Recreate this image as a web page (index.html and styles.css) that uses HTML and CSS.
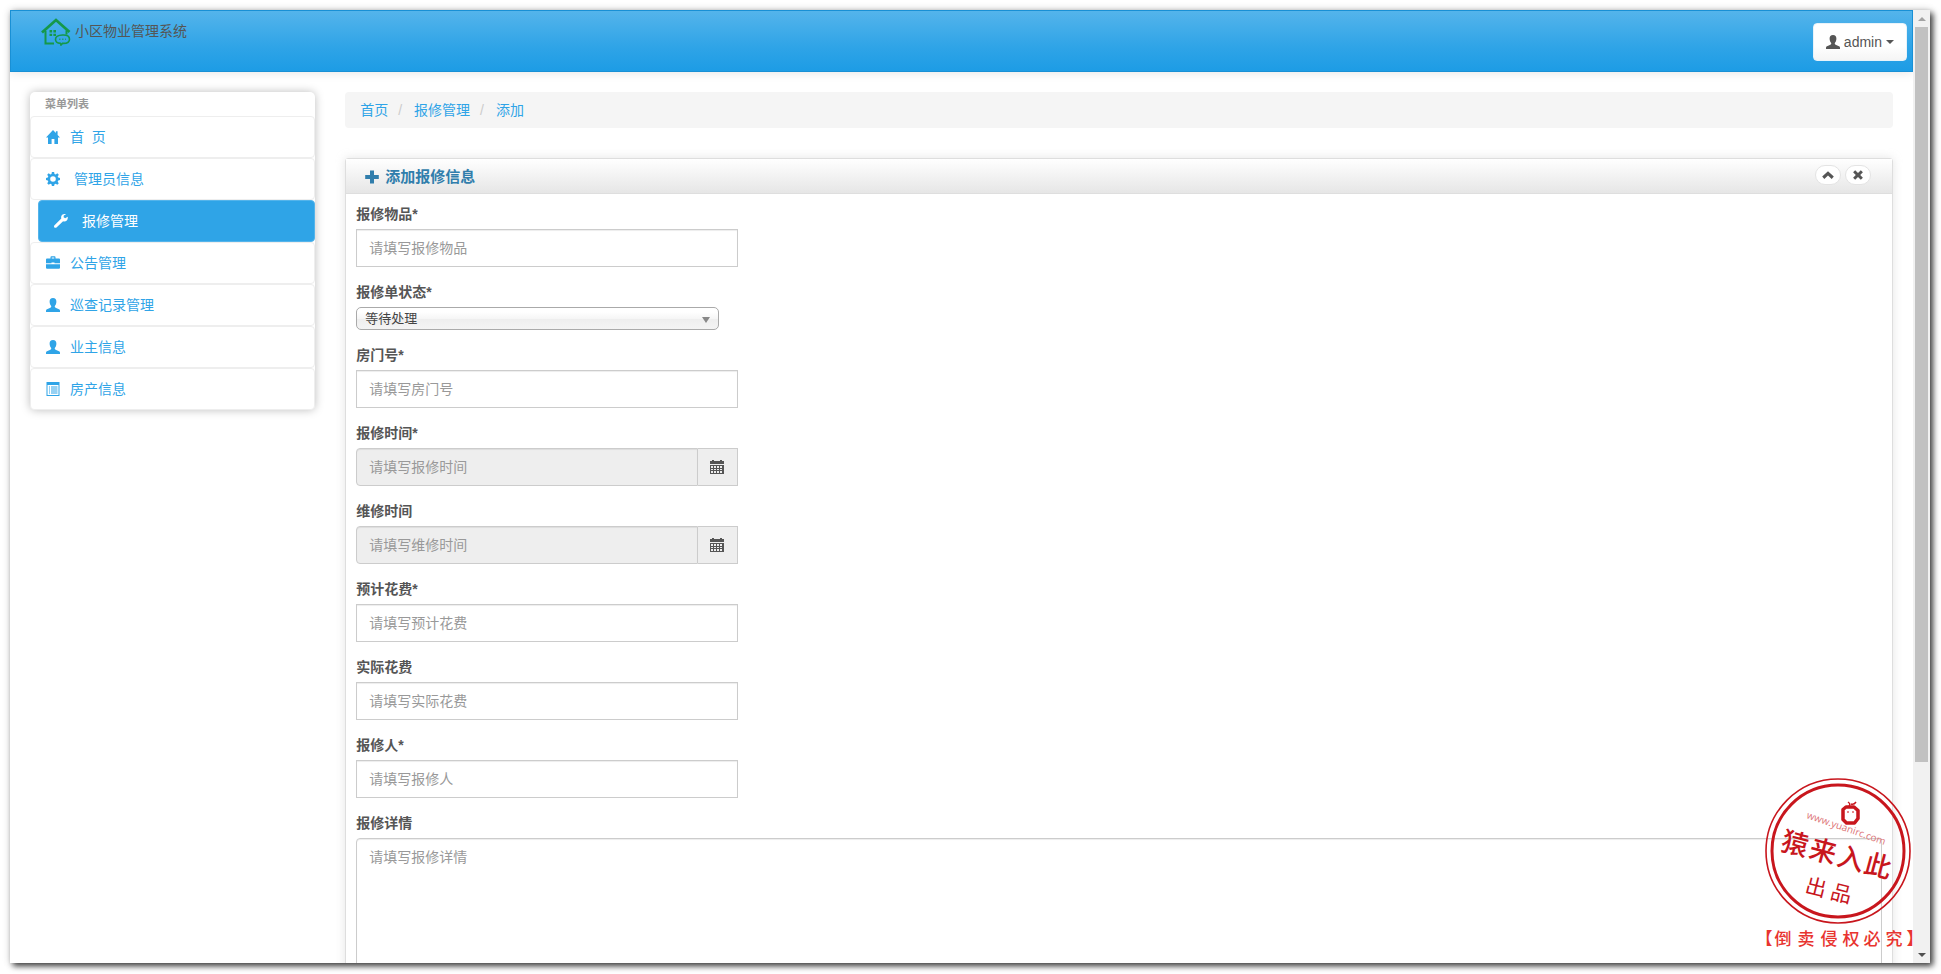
FILE: index.html
```html
<!DOCTYPE html>
<html lang="zh-CN">
<head>
    <title>小区物业管理系统</title>
    <meta charset="UTF-8">
    <meta name="viewport" content="width=device-width, initial-scale=1.0">
    <link rel="stylesheet" href="styles.css">
</head>
<body>
    <!-- 图标 -->
    <svg class="symbols" aria-hidden="true">
        <symbol id="i-home" viewBox="0 0 14 14"><path d="M7 0 0 7.4h2V14h3.600V9h2.800v5H12V7.400h2L11.600 4.900V1.300H9.900v1.800z"/></symbol>
        <symbol id="i-cog" viewBox="0 0 14 14"><path fill-rule="evenodd" d="M5.900 0h2.200l.4 1.900 1.200.5 1.600-1.100 1.500 1.500-1.100 1.600.5 1.200 1.800.4v2.100l-1.800.4-.5 1.200 1.100 1.600-1.500 1.500-1.600-1.100-1.200.5-.4 1.800H5.900l-.4-1.800-1.200-.5-1.600 1.100-1.500-1.500 1.100-1.600-.5-1.200L0 8.100V6l1.800-.4.5-1.200-1.100-1.600 1.500-1.500 1.600 1.100 1.200-.5zM7 4.200a2.800 2.800 0 1 0 0 5.600 2.800 2.800 0 0 0 0-5.600z"/></symbol>
        <symbol id="i-wrench" viewBox="0 0 14 14"><path d="M13.700 2.700 11.200 4.200 9.600 3.200 9.800 1.500 12 .2C10.200-.4 8 .3 7.300 2.200c-.3.900-.2 1.600 0 2.300L.5 11.300c-.7.700-.6 1.600-.1 2.100.6.600 1.500.6 2.100 0l6.600-6.200c1.200.4 2.700.2 3.700-.8.900-.9 1.200-2.400.9-3.700z"/></symbol>
        <symbol id="i-case" viewBox="0 0 14 14"><path d="M4.500 2.500V1.200Q4.500.3 5.400.3h3.200q.9 0 .9.900v1.300H13q1 0 1 1V7.300H8.500V6.500h-3v.8H0V3.500q0-1 1-1zm1.200 0h2.600V1.400H5.700zM0 8.300h14v3.500q0 .9-1 .9H1q-1 0-1-.9z"/></symbol>
        <symbol id="i-user" viewBox="0 0 14 14"><path d="M7 0C4.700 0 3.500 1.600 3.600 3.900c.1 1.600.6 2.900 1.400 3.900.5.700.3 1.600-.6 2L1 11.300c-.7.300-1 .8-1 1.500V14h14v-1.200c0-.7-.3-1.200-1-1.500L9.600 9.800c-.9-.4-1.100-1.300-.6-2 .8-1 1.300-2.300 1.400-3.900C10.500 1.600 9.300 0 7 0z"/></symbol>
        <symbol id="i-list" viewBox="0 0 14 14"><path fill-rule="evenodd" d="M.500 0h13v14H.5zM1.500 3v10h11V3zM3 4.500h1v1H3zm2 0h6.500v1H5zM3 6.500h1v1H3zm2 0h6.500v1H5zM3 8.500h1v1H3zm2 0h6.500v1H5zM3 10.500h1v1H3zm2 0h6.500v1H5z"/></symbol>
        <symbol id="i-plus" viewBox="0 0 14 14"><path d="M5 .500h4V5h4.800v4H9v4.500H5V9H.2V5H5z"/></symbol>
        <symbol id="i-up" viewBox="0 0 12 12"><path d="M6 2.200 11.800 7.600 9.700 9.900 6 6.500 2.300 9.900.2 7.600z"/></symbol>
        <symbol id="i-remove" viewBox="0 0 12 12"><path d="M3.200 1.200 6 4 8.800 1.200 10.900 3.300 8.200 6l2.700 2.700-2.100 2.100L6 8.100l-2.800 2.700-2.100-2.100L3.800 6 1.100 3.300z"/></symbol>
        <symbol id="i-calendar" viewBox="0 0 14 14"><path fill-rule="evenodd" d="M0 1h2V0h2v1h6V0h2v1h2v3H0zM0 5h14v9H0zM1 6v2h2V6zm3 0v2h2V6zm3 0v2h2V6zm3 0v2h2V6zM1 9v1h2V9zm3 0v1h2V9zm3 0v1h2V9zm3 0v1h2V9zM1 11v2h2v-2zm3 0v2h2v-2zm3 0v2h2v-2zm3 0v2h2v-2z"/></symbol>
    </svg>

    <div class="window">
        <div class="page">
            <header class="navbar">
                <a class="brand" href="#">
                    <svg class="logo" viewBox="0 0 30 28" fill="none" stroke="#15984a" stroke-width="2" aria-hidden="true">
                        <path d="M1 14.500 15 2l13.500 12" stroke-width="2.800"/>
                        <path d="M4.500 13v12.500H13M25.500 12.500v4"/>
                        <path d="M21.500 17h1q6 0 6 4.200t-6 4.200h-1l-1.500 1.600-.5-1.600q-5-.3-5-4.200t7-4.200z" stroke-width="1.600"/>
                        <path d="M18 21.200h1.500m1.500 0h1.500m1.500 0H25" stroke-width="1"/>
                        <path d="M8.500 12h2.600v2.600H8.500zm3.900 0H15v2.600h-2.600zM8.500 15.800h2.600v2.300H8.500zm3.900 0H15v2.300h-2.600z" fill="#15984a" stroke="none"/>
                    </svg>
                    <span>小区物业管理系统</span>
                </a>
                <button type="button" class="user-btn">
                    <svg class="icon" aria-hidden="true"><use href="#i-user"/></svg>
                    <span>admin</span>
                    <span class="caret"></span>
                </button>
            </header>

            <div class="row">
                <nav class="sidebar">
                    <div class="menu">
                        <div class="menu-header">菜单列表</div>
                        <ul>
                            <li><a href="#"><svg class="icon" aria-hidden="true"><use href="#i-home"/></svg>首&nbsp; 页</a></li>
                            <li><a href="#" class="wide"><svg class="icon" aria-hidden="true"><use href="#i-cog"/></svg>管理员信息</a></li>
                            <li class="active"><a href="#" class="wide"><svg class="icon" aria-hidden="true"><use href="#i-wrench"/></svg>报修管理</a></li>
                            <li><a href="#"><svg class="icon" aria-hidden="true"><use href="#i-case"/></svg>公告管理</a></li>
                            <li><a href="#"><svg class="icon" aria-hidden="true"><use href="#i-user"/></svg>巡查记录管理</a></li>
                            <li><a href="#"><svg class="icon" aria-hidden="true"><use href="#i-user"/></svg>业主信息</a></li>
                            <li><a href="#"><svg class="icon" aria-hidden="true"><use href="#i-list"/></svg>房产信息</a></li>
                        </ul>
                    </div>
                </nav>

                <main class="content">
                    <ul class="breadcrumb">
                        <li><a href="#">首页</a></li>
                        <li><a href="#">报修管理</a></li>
                        <li><a href="#">添加</a></li>
                    </ul>

                    <section class="box">
                        <div class="box-header">
                            <h2><svg class="icon" aria-hidden="true"><use href="#i-plus"/></svg>添加报修信息</h2>
                            <div class="box-icon">
                                <button type="button" aria-label="收起"><svg aria-hidden="true"><use href="#i-up"/></svg></button>
                                <button type="button" aria-label="关闭"><svg aria-hidden="true"><use href="#i-remove"/></svg></button>
                            </div>
                        </div>
                        <form class="box-content">
                            <div class="form-group">
                                <label for="item">报修物品*</label>
                                <input type="text" id="item" class="form-control" placeholder="请填写报修物品">
                            </div>
                            <div class="form-group">
                                <label for="status">报修单状态*</label>
                                <div class="select-wrap">
                                    <select id="status">
                                        <option>等待处理</option>
                                    </select>
                                </div>
                            </div>
                            <div class="form-group">
                                <label for="room">房门号*</label>
                                <input type="text" id="room" class="form-control" placeholder="请填写房门号">
                            </div>
                            <div class="form-group">
                                <label for="report_time">报修时间*</label>
                                <div class="input-group">
                                    <input type="text" id="report_time" class="form-control" placeholder="请填写报修时间" readonly>
                                    <button type="button" class="addon" aria-label="选择报修时间"><svg class="icon" aria-hidden="true"><use href="#i-calendar"/></svg></button>
                                </div>
                            </div>
                            <div class="form-group">
                                <label for="repair_time">维修时间</label>
                                <div class="input-group">
                                    <input type="text" id="repair_time" class="form-control" placeholder="请填写维修时间" readonly>
                                    <button type="button" class="addon" aria-label="选择维修时间"><svg class="icon" aria-hidden="true"><use href="#i-calendar"/></svg></button>
                                </div>
                            </div>
                            <div class="form-group">
                                <label for="plan_cost">预计花费*</label>
                                <input type="text" id="plan_cost" class="form-control" placeholder="请填写预计花费">
                            </div>
                            <div class="form-group">
                                <label for="real_cost">实际花费</label>
                                <input type="text" id="real_cost" class="form-control" placeholder="请填写实际花费">
                            </div>
                            <div class="form-group">
                                <label for="person">报修人*</label>
                                <input type="text" id="person" class="form-control" placeholder="请填写报修人">
                            </div>
                            <div class="form-group">
                                <label for="detail">报修详情</label>
                                <textarea id="detail" placeholder="请填写报修详情"></textarea>
                            </div>
                        </form>
                    </section>
                </main>
            </div>
        </div>

        <div class="scrollbar" aria-hidden="true">
            <span class="arrow up"></span>
            <span class="track"><span class="thumb"></span></span>
            <span class="arrow down"></span>
        </div>

        <!-- 印章 -->
        <svg class="stamp" viewBox="0 0 160 180">
            <g fill="none" stroke="#c8161d">
                <circle cx="78" cy="76" r="72" stroke-width="1.600"/>
                <circle cx="78" cy="76" r="66" stroke-width="3"/>
                <path d="M83 34.500 86 32h8l4 3.500v8L94.500 48h-8L83 44.500z" stroke-width="3.500" stroke-linejoin="round"/>
                <path d="M89 31q2-2-1-4M91 29q3 1 5-2" stroke-width="1.500"/>
                <path d="M87 37h2m3 0h2" stroke-width="1"/>
            </g>
            <text class="stamp-url" transform="translate(46 43) rotate(19)">www.yuanirc.com</text>
            <g class="stamp-name" transform="translate(77 78) rotate(15)">
                <text x="-43" y="0">猿</text>
                <text x="-14" y="0">来</text>
                <text x="15" y="0">入</text>
                <text x="43" y="0">此</text>
            </g>
            <g class="stamp-sub" transform="translate(69 114) rotate(14)">
                <text x="-13" y="0">出</text>
                <text x="13" y="0">品</text>
            </g>
            <text class="stamp-foot" x="4 23 46 69 91 112 134 155" y="170">【倒卖侵权必究】</text>
        </svg>
    </div>
</body>
</html>
```

FILE: styles.css
```css
* {
    box-sizing: border-box;
    margin: 0;
    padding: 0;
}

body {
    padding: 10px 11px 11px 10px;
    height: 100vh;
    overflow: hidden;
    font-family: "Liberation Sans", "Noto Sans CJK SC", sans-serif;
    font-size: 14px;
    line-height: 20px;
    color: #555;
    background: #fff;
}

a {
    color: #2fa4e7;
    text-decoration: none;
}

ul {
    list-style: none;
}

button,
input,
select,
textarea {
    font-family: inherit;
    font-size: 14px;
    color: #555;
}

.symbols {
    position: absolute;
    width: 0;
    height: 0;
}

.icon {
    width: 14px;
    height: 14px;
    fill: currentColor;
    flex: none;
}

.window {
    position: relative;
    display: flex;
    height: 100%;
    background: #fff;
    box-shadow: 3px 3px 6px rgba(0, 0, 0, 0.75), 0 0 8px rgba(0, 0, 0, 0.15);
}

.page {
    flex: 1;
    min-width: 0;
    overflow: hidden;
}

/* 顶部导航 */
.navbar {
    display: flex;
    justify-content: space-between;
    align-items: flex-start;
    height: 62px;
    padding: 7px 5px 0 30px;
    border: 1px solid #1990d5;
    background: linear-gradient(#54b4eb, #2fa4e7 60%, #1d9ce5);
    box-shadow: 0 1px 10px rgba(0, 0, 0, 0.1);
}

.brand {
    display: flex;
    gap: 4px;
    color: #555;
}

.brand span {
    padding-top: 3px;
}

.logo {
    width: 30px;
    height: 28px;
}

.user-btn {
    display: flex;
    align-items: center;
    gap: 4px;
    height: 38px;
    margin-top: 5px;
    padding: 0 12px;
    border: 1px solid #e8f3fa;
    border-radius: 4px;
    background: linear-gradient(#fff 60%, #f5f5f5);
    cursor: pointer;
}

.caret {
    border: 4px solid transparent;
    border-top-color: #555;
    border-bottom: 0;
}

/* 两栏布局 */
.row {
    display: flex;
    padding: 20px 5px 0;
}

.sidebar {
    width: 16.65%;
    padding: 0 15px;
}

.content {
    flex: 1;
    min-width: 0;
    padding: 0 15px;
}

.menu {
    border-radius: 5px;
    background: #fff;
    box-shadow: 0 0 10px #bdbdbd;
}

.menu-header {
    height: 24px;
    padding: 0 15px;
    font-size: 11px;
    font-weight: bold;
    line-height: 24px;
    color: #999;
}

.menu a {
    display: flex;
    align-items: center;
    gap: 10px;
    height: 42px;
    padding: 0 15px;
    border: 1px solid #eee;
    border-radius: 4px;
    white-space: pre;
}

.menu a.wide {
    gap: 14px;
}

.menu .active a {
    margin-left: 8px;
    border-color: #54b4eb;
    color: #fff;
    background: #2fa4e7;
}

.breadcrumb {
    display: flex;
    height: 36px;
    margin-bottom: 30px;
    padding: 8px 15px;
    border-radius: 4px;
    background: #f5f5f5;
}

.breadcrumb li + li::before {
    content: "/";
    padding: 0 12px 0 10px;
    color: #ccc;
}

.box {
    border: 1px solid #dedede;
    border-radius: 3px;
    box-shadow: 0 0 10px rgba(189, 189, 189, 0.4);
}

.box-header {
    display: flex;
    justify-content: space-between;
    height: 35px;
    padding: 6px 21px 0 19px;
    border-bottom: 1px solid #dedede;
    background: linear-gradient(#fff, #e6e6e6);
}

.box-header h2 {
    display: flex;
    align-items: center;
    gap: 6px;
    height: 24px;
    font-size: 15px;
    color: #317eac;
}

.box-icon {
    display: flex;
    gap: 4px;
}

.box-icon button {
    display: flex;
    align-items: center;
    justify-content: center;
    width: 26px;
    height: 20px;
    border: 1px solid #e4e4e4;
    border-radius: 10px;
    background: #fff;
    cursor: pointer;
}

.box-icon svg {
    width: 12px;
    height: 12px;
    fill: #555;
}

/* 表单 */
.box-content {
    padding: 10px;
}

.form-group {
    margin-bottom: 15px;
}

.form-group label {
    display: block;
    margin-bottom: 5px;
    font-weight: bold;
}

.form-control {
    display: block;
    width: 25%;
    height: 38px;
    padding: 8px 12px;
    border: 1px solid #ccc;
    background: #fff;
    box-shadow: inset 0 1px 1px rgba(0, 0, 0, 0.075);
}

.form-control[readonly] {
    background: #eee;
}

::placeholder {
    color: #999;
}

.input-group {
    display: flex;
    width: 25%;
}

.input-group .form-control {
    flex: 1;
    min-width: 0;
    border-radius: 4px 0 0 4px;
}

.addon {
    display: flex;
    align-items: center;
    justify-content: center;
    width: 40px;
    border: 1px solid #ccc;
    border-left: 0;
    background: #eee;
}

.select-wrap {
    position: relative;
    width: 363px;
}

.select-wrap::after {
    content: "";
    position: absolute;
    top: 10px;
    right: 9px;
    border: 4px solid transparent;
    border-top: 6px solid #888;
    border-bottom: 0;
    pointer-events: none;
}

.select-wrap select {
    display: block;
    width: 100%;
    height: 23px;
    padding: 0 8px;
    border: 1px solid #aaa;
    border-radius: 5px;
    font-size: 13px;
    color: #444;
    background: linear-gradient(#fff 20%, #f6f6f6 50%, #eee 52%, #f4f4f4);
    appearance: none;
}

textarea {
    display: block;
    width: 100%;
    height: 240px;
    padding: 8px 12px;
    border: 1px solid #ccc;
    border-radius: 4px;
    line-height: 20px;
    box-shadow: inset 0 1px 1px rgba(0, 0, 0, 0.075);
    resize: none;
}

/* 滚动条 */
.scrollbar {
    display: flex;
    flex-direction: column;
    width: 17px;
    background: #f1f1f1;
}

.arrow {
    display: flex;
    align-items: center;
    justify-content: center;
    height: 17px;
}

.arrow::before {
    content: "";
    border: 4px solid transparent;
}

.arrow.up::before {
    border-top: 0;
    border-bottom-color: #a3a3a3;
}

.arrow.down::before {
    border-top-color: #505050;
    border-bottom: 0;
}

.track {
    flex: 1;
    padding: 0 2px;
}

.thumb {
    display: block;
    height: 80%;
    background: #c1c1c1;
}

/* 印章 */
.stamp {
    position: absolute;
    right: 10px;
    bottom: 8px;
    width: 160px;
    height: 180px;
    overflow: visible;
    fill: #c8161d;
    text-anchor: middle;
    font-family: "Noto Sans CJK SC", sans-serif;
}

.stamp-url {
    font-family: "Open Sans", sans-serif;
    font-size: 10px;
    text-anchor: start;
    fill: #dd7376;
}

.stamp-name {
    font-size: 27px;
    font-weight: 500;
    dominant-baseline: central;
}

.stamp-sub {
    font-size: 21px;
    dominant-baseline: central;
}

.stamp-foot {
    font-size: 17px;
    font-weight: 500;
    fill: #e8342f;
}
```
